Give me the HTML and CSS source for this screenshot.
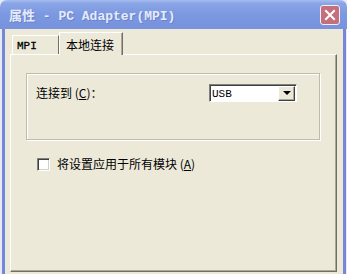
FILE: index.html
```html
<!doctype html>
<html lang="zh-cn">

<head>
    <title>属性 - PC Adapter(MPI)</title>
    <meta charset="utf-8" />
    <link rel="stylesheet" href="styles.css">
</head>

<body>
    <div class="window">
        <div class="titlebar">
            <span class="title">属性 - PC Adapter(MPI)</span>
            <span class="close">
                <svg width="12" height="12" viewBox="0 0 12 12">
                    <path d="M2 2 L10 10 M10 2 L2 10" stroke="#fff" stroke-width="2" stroke-linecap="square" />
                </svg>
            </span>
        </div>
        <div class="client">
            <div class="tabs">
                <div class="tab latin">MPI</div>
                <div class="tab active">本地连接</div>
            </div>
            <div class="panel">
                <div class="group">
                    <span class="label">连接到 (<u>C</u>)：</span>
                    <div class="combo">
                        <span class="latin">USB</span>
                        <span class="arrow"></span>
                    </div>
                </div>
                <label class="check">
                    <span class="box"></span>
                    <span>将设置应用于所有模块 (<u>A</u>)</span>
                </label>
            </div>
        </div>
    </div>
</body>

</html>
```

FILE: styles.css
```css
body {
    margin: 0;
    background-color: #e6e9f6;
    font-family: "Noto Sans CJK SC", sans-serif;
    font-size: 12px;
    color: #000;
}

.window {
    width: 347px;
    height: 274px;
    overflow: hidden;
}

.titlebar {
    height: 29px;
    display: flex;
    align-items: center;
    justify-content: space-between;
    padding: 0 7px 0 9px;
    box-sizing: border-box;
    border-radius: 7px 7px 0 0;
    background: linear-gradient(#a6bdee 0%, #8aa5e6 12%, #7b98e0 50%, #7892de 100%);
}

.title {
    font-family: "Liberation Mono", "Noto Sans CJK SC", monospace;
    font-size: 13px;
    font-weight: bold;
    color: #e4ebf9;
    text-shadow: 1px 1px 0 #6a82c8;
}

.close {
    width: 18px;
    height: 18px;
    display: flex;
    align-items: center;
    justify-content: center;
    background-color: #c46f7c;
    border: 1px solid #eef0fa;
    border-radius: 3px;
}

.client {
    height: 245px;
    margin: 0 1px 0 2px;
    padding: 3px 6px 0 5px;
    background-color: #ece9d8;
    border-left: 3px solid #7886d8;
    border-right: 3px solid #7886d8;
}

.latin {
    font-family: "Liberation Mono", monospace;
    font-size: 11px;
}

.tabs {
    display: flex;
    align-items: flex-end;
    padding-left: 2px;
    height: 22px;
}

.tab {
    height: 19px;
    box-sizing: border-box;
    display: flex;
    align-items: center;
    padding: 2px 7px 0;
    border-top: 1px solid #fff;
    border-left: 1px solid #fff;
    border-right: 1px solid #716f64;
}

.tab.latin {
    width: 47px;
    padding-left: 4px;
    -webkit-text-stroke: 0.3px #000;
}

.tab.active {
    height: 23px;
    width: 64px;
    margin-bottom: -1px;
    padding: 0 6px;
    position: relative;
    background-color: #ece9d8;
    box-shadow: inset -1px 0 0 #aca899;
}

.panel {
    height: 218px;
    box-sizing: border-box;
    border-top: 1px solid #fff;
    border-left: 1px solid #fff;
    border-right: 1px solid #716f64;
    border-bottom: 1px solid #716f64;
    box-shadow: inset -1px -1px 0 #aca899;
    padding: 18px 16px 0 15px;
}

.group {
    height: 67px;
    box-sizing: border-box;
    display: flex;
    justify-content: space-between;
    align-items: flex-start;
    padding: 10px 22px 0 9px;
    border: 1px solid #c0bcaa;
    box-shadow: inset 1px 1px 0 #fff, 1px 1px 0 #fff;
}

.label {
    line-height: 18px;
}

.combo {
    width: 88px;
    height: 18px;
    box-sizing: border-box;
    display: flex;
    align-items: center;
    justify-content: space-between;
    background-color: #fff;
    border-top: 1px solid #808080;
    border-left: 1px solid #808080;
    border-right: 1px solid #fff;
    border-bottom: 1px solid #fff;
    box-shadow: inset 1px 1px 0 #404040;
    padding: 1px 1px 0 2px;
}

.arrow {
    width: 17px;
    height: 15px;
    box-sizing: border-box;
    margin-top: -1px;
    background-color: #ece9d8;
    border-top: 1px solid #fff;
    border-left: 1px solid #fff;
    border-right: 1px solid #404040;
    border-bottom: 1px solid #404040;
    box-shadow: inset -1px -1px 0 #aca899;
    position: relative;
}

.arrow::after {
    content: "";
    position: absolute;
    left: 4px;
    top: 4px;
    border-left: 4px solid transparent;
    border-right: 4px solid transparent;
    border-top: 4px solid #000;
}

.check {
    display: flex;
    align-items: center;
    gap: 7px;
    margin: 16px 0 0 11px;
    line-height: 16px;
}

.box {
    width: 13px;
    height: 13px;
    box-sizing: border-box;
    background-color: #fff;
    border-top: 1px solid #808080;
    border-left: 1px solid #808080;
    border-right: 1px solid #fff;
    border-bottom: 1px solid #fff;
    box-shadow: inset 1px 1px 0 #404040, inset -1px -1px 0 #d4d0c8;
}
```
